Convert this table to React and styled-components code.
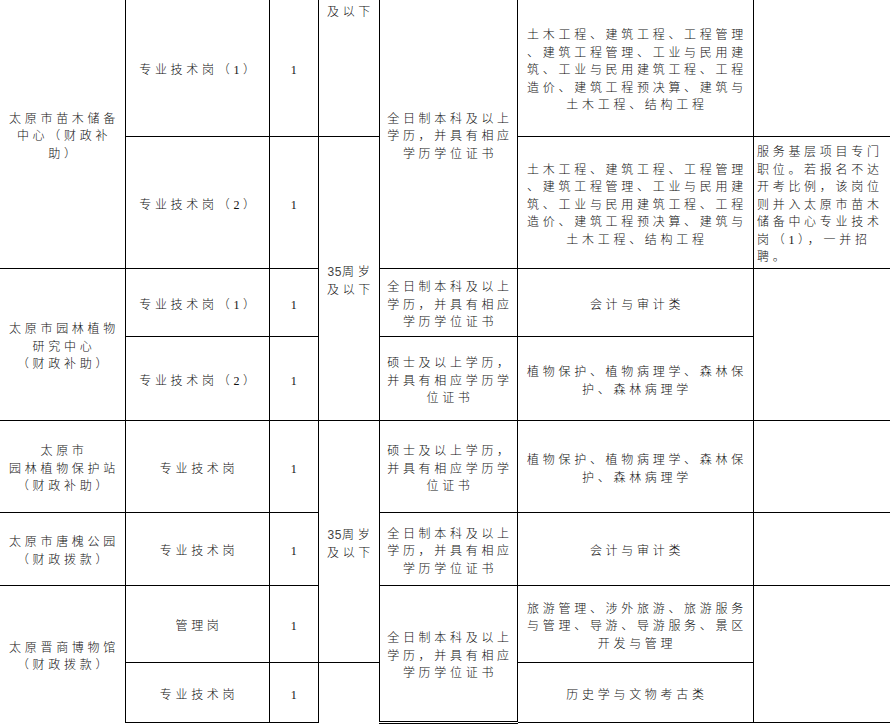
import React from "react";
import styled, { createGlobalStyle } from "styled-components";

const GlobalStyle = createGlobalStyle`
  html, body {
    margin: 0;
    padding: 0;
    background: #fff;
    overflow: hidden;
  }
`;

const Page = styled.div`
  width: 890px;
  height: 724px;
  overflow: hidden;
`;

const Sheet = styled.table`
  border-collapse: collapse;
  table-layout: fixed;
  width: 914px;
  margin: -1px 0 0 -1px;
  font-family: "Liberation Serif", "Noto Sans CJK SC", serif;
  font-size: 12px;
  font-weight: 300;
  color: #111;
`;

const Row = styled.tr`
  height: ${(p) => p.$h}px;
`;

const Cell = styled.td`
  border: 1px solid #000;
  border-bottom: ${(p) =>
    p.$noBottom ? "none" : p.$double ? "3px double #000" : "1px solid #000"};
  padding: ${(p) => (p.$top ? "4px 0 0 3px" : "6px 0 0 3px")};
  text-align: ${(p) => (p.$left ? "left" : "center")};
  vertical-align: ${(p) => (p.$top ? "top" : "middle")};
  line-height: 17.6px;
  letter-spacing: 3.7px;
  overflow: hidden;
`;

const Line = styled.span`
  display: block;
  white-space: nowrap;
`;

const Digits = styled.span`
  font-family: "Liberation Sans", sans-serif;
  color: #444;
  letter-spacing: 0.5px;
`;

const Text = ({ lines }) => (
  <>
    {lines.map((l, i) => (
      <Line key={i}>{l}</Line>
    ))}
  </>
);

const civil = [
  "土木工程、建筑工程、工程管理",
  "、建筑工程管理、工业与民用建",
  "筑、工业与民用建筑工程、工程",
  "造价、建筑工程预决算、建筑与",
  "土木工程、结构工程",
];
const fullTime = ["全日制本科及以上", "学历，并具有相应", "学历学位证书"];
const master = ["硕士及以上学历，", "并具有相应学历学", "位证书"];
const plant = ["植物保护、植物病理学、森林保", "护、森林病理学"];
const age = [
  <>
    <Digits>35</Digits>周岁
  </>,
  "及以下",
];

export default function App() {
  return (
    <Page>
      <GlobalStyle />
      <Sheet>
        <colgroup>
          <col style={{ width: 126 }} />
          <col style={{ width: 144 }} />
          <col style={{ width: 49 }} />
          <col style={{ width: 61 }} />
          <col style={{ width: 138 }} />
          <col style={{ width: 236 }} />
          <col style={{ width: 160 }} />
        </colgroup>
        <tbody>
          <Row $h={137}>
            <Cell rowSpan={2}>
              <Text lines={["太原市苗木储备", "中心（财政补", "助）"]} />
            </Cell>
            <Cell>专业技术岗（1）</Cell>
            <Cell>1</Cell>
            <Cell $top>及以下</Cell>
            <Cell rowSpan={2}>
              <Text lines={fullTime} />
            </Cell>
            <Cell>
              <Text lines={civil} />
            </Cell>
            <Cell />
          </Row>
          <Row $h={132}>
            <Cell>专业技术岗（2）</Cell>
            <Cell>1</Cell>
            <Cell rowSpan={3}>
              <Text lines={age} />
            </Cell>
            <Cell>
              <Text lines={civil} />
            </Cell>
            <Cell $left>
              <Text
                lines={[
                  "服务基层项目专门",
                  "职位。若报名不达",
                  "开考比例，该岗位",
                  "则并入太原市苗木",
                  "储备中心专业技术",
                  "岗（1），一并招",
                  "聘。",
                ]}
              />
            </Cell>
          </Row>
          <Row $h={68}>
            <Cell rowSpan={2}>
              <Text lines={["太原市园林植物", "研究中心", "（财政补助）"]} />
            </Cell>
            <Cell>专业技术岗（1）</Cell>
            <Cell>1</Cell>
            <Cell>
              <Text lines={fullTime} />
            </Cell>
            <Cell>会计与审计类</Cell>
            <Cell rowSpan={2} />
          </Row>
          <Row $h={84}>
            <Cell>专业技术岗（2）</Cell>
            <Cell>1</Cell>
            <Cell>
              <Text lines={master} />
            </Cell>
            <Cell>
              <Text lines={plant} />
            </Cell>
          </Row>
          <Row $h={92}>
            <Cell>
              <Text lines={["太原市", "园林植物保护站", "（财政补助）"]} />
            </Cell>
            <Cell>专业技术岗</Cell>
            <Cell>1</Cell>
            <Cell rowSpan={3}>
              <Text lines={age} />
            </Cell>
            <Cell>
              <Text lines={master} />
            </Cell>
            <Cell>
              <Text lines={plant} />
            </Cell>
            <Cell />
          </Row>
          <Row $h={73}>
            <Cell>
              <Text lines={["太原市唐槐公园", "（财政拨款）"]} />
            </Cell>
            <Cell>专业技术岗</Cell>
            <Cell>1</Cell>
            <Cell>
              <Text lines={fullTime} />
            </Cell>
            <Cell>会计与审计类</Cell>
            <Cell />
          </Row>
          <Row $h={77}>
            <Cell rowSpan={2} $noBottom>
              <Text lines={["太原晋商博物馆", "（财政拨款）"]} />
            </Cell>
            <Cell>管理岗</Cell>
            <Cell>1</Cell>
            <Cell rowSpan={2} $double>
              <Text lines={fullTime} />
            </Cell>
            <Cell>
              <Text
                lines={[
                  "旅游管理、涉外旅游、旅游服务",
                  "与管理、导游、导游服务、景区",
                  "开发与管理",
                ]}
              />
            </Cell>
            <Cell rowSpan={2} />
          </Row>
          <Row $h={60}>
            <Cell>专业技术岗</Cell>
            <Cell>1</Cell>
            <Cell $noBottom />
            <Cell>历史学与文物考古类</Cell>
          </Row>
        </tbody>
      </Sheet>
    </Page>
  );
}
